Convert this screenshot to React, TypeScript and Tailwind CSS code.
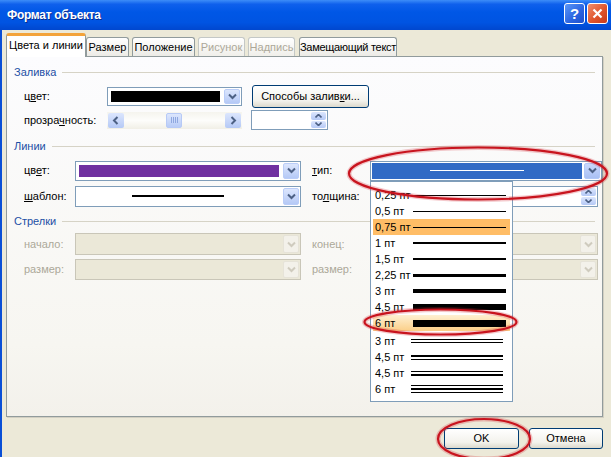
import React from "react";

function Chevron({ color = "#4D6185", dir = "down" }: { color?: string; dir?: "down" | "up" | "left" | "right" }) {
  const d =
    dir === "down"
      ? "M1 1.5 L4.5 5 L8 1.5"
      : dir === "up"
      ? "M1 5 L4.5 1.5 L8 5"
      : dir === "left"
      ? "M5.5 1 L2 4.5 L5.5 8"
      : "M2.5 1 L6 4.5 L2.5 8";
  const vert = dir === "down" || dir === "up";
  return (
    <svg width={vert ? 9 : 8} height={vert ? 7 : 9} viewBox={vert ? "0 0 9 7" : "0 0 8 9"}>
      <path d={d} stroke={color} strokeWidth="2" fill="none" />
    </svg>
  );
}

function Arrow({ disabled, blue }: { disabled?: boolean; blue?: boolean }) {
  return (
    <div
      className={`w-[16px] shrink-0 m-px rounded-[2px] flex items-center justify-center border ${
        disabled
          ? "bg-[#F3F1EA] border-[#E6E3D8]"
          : blue
          ? "bg-[linear-gradient(#C9D8FC,#A9C0F3)] border-[#B2C8F7]"
          : "bg-[linear-gradient(#DCE6FD,#B5C9F6)] border-[#BACDF8]"
      }`}
    >
      <Chevron color={disabled ? "#CFCBBE" : "#4D6185"} />
    </div>
  );
}

function Combo({ className, children, disabled }: { className: string; children?: React.ReactNode; disabled?: boolean }) {
  return (
    <div
      className={`flex shrink-0 border ${
        disabled ? "border-[#C9C6B8] bg-[#EBE8D8]" : "border-[#7F9DB9] bg-white"
      } ${className}`}
    >
      <div className="flex-1 flex items-center justify-center p-[3px]">{children}</div>
      <Arrow disabled={disabled} />
    </div>
  );
}

function Spin({ className }: { className: string }) {
  return (
    <div className={`flex shrink-0 border border-[#7F9DB9] bg-white ${className}`}>
      <div className="flex-1" />
      <div className="w-[15px] m-px flex flex-col gap-px">
        <div className="flex-1 rounded-[2px] bg-[linear-gradient(#DCE6FD,#B5C9F6)] flex items-center justify-center">
          <svg width="7" height="4" viewBox="0 0 7 4">
            <path d="M0.5 3.5 L3.5 0.5 L6.5 3.5" stroke="#4D6185" strokeWidth="1.6" fill="none" />
          </svg>
        </div>
        <div className="flex-1 rounded-[2px] bg-[linear-gradient(#DCE6FD,#B5C9F6)] flex items-center justify-center">
          <svg width="7" height="4" viewBox="0 0 7 4">
            <path d="M0.5 0.5 L3.5 3.5 L6.5 0.5" stroke="#4D6185" strokeWidth="1.6" fill="none" />
          </svg>
        </div>
      </div>
    </div>
  );
}

function Header({ title, className }: { title: string; className: string }) {
  return (
    <div className={`flex items-center pl-[7px] pr-[7px] ${className}`}>
      <span className="text-[#1D4FA5]">{title}</span>
      <div className="flex-1 h-px bg-[#D6D3C6] ml-[6px]" />
    </div>
  );
}

function XPButton({ className, children }: { className: string; children: React.ReactNode }) {
  return (
    <div
      className={`flex items-center justify-center border border-[#003C74] rounded-[3px] bg-[linear-gradient(#FFFFFF,#F3F2EC_70%,#DCD9CC)] ${className}`}
    >
      {children}
    </div>
  );
}

type Item = { label: string; kind: "single" | "compound"; lines: number[]; hl?: "sel" | "hover" };

const items: Item[] = [
  { label: "0,25 пт", kind: "single", lines: [1] },
  { label: "0,5 пт", kind: "single", lines: [1] },
  { label: "0,75 пт", kind: "single", lines: [1], hl: "sel" },
  { label: "1 пт", kind: "single", lines: [2] },
  { label: "1,5 пт", kind: "single", lines: [2] },
  { label: "2,25 пт", kind: "single", lines: [3] },
  { label: "3 пт", kind: "single", lines: [4] },
  { label: "4,5 пт", kind: "single", lines: [6] },
  { label: "6 пт", kind: "single", lines: [7], hl: "hover" },
];

const compound: Item[] = [
  { label: "3 пт", kind: "compound", lines: [1, 1] },
  { label: "4,5 пт", kind: "compound", lines: [2, 1] },
  { label: "4,5 пт", kind: "compound", lines: [1, 2] },
  { label: "6 пт", kind: "compound", lines: [1, 2, 1] },
];

function ListItem({ it }: { it: Item }) {
  const bg =
    it.hl === "sel"
      ? "bg-[#FFBD66]"
      : it.hl === "hover"
      ? "bg-[linear-gradient(#FEF0D2,#FBCF88)]"
      : "";
  return (
    <div className={`flex items-center h-[16px] pl-[2px] ${bg}`}>
      <span className="whitespace-nowrap">{it.label}</span>
      {it.kind === "single" ? (
        <div className="ml-auto mr-[4px] w-[93px] bg-black" style={{ height: it.lines[0] }} />
      ) : (
        <div className="ml-auto mr-[7px] w-[92px] flex flex-col gap-[2px]">
          {it.lines.map((h, i) => (
            <div key={i} className="w-full bg-black" style={{ height: h }} />
          ))}
        </div>
      )}
    </div>
  );
}

export default function App() {
  return (
    <div className="w-[611px] h-[457px] overflow-hidden relative bg-[#ECE9D8] flex flex-col font-['Liberation_Sans',Arial,sans-serif] text-[11px] text-black leading-none">
      {/* Title bar */}
      <div className="h-[30px] shrink-0 flex items-center pl-[7px] pr-[3px] bg-[linear-gradient(to_bottom,#3D8DF8_0%,#0F60EC_14%,#0057E6_40%,#0054E2_75%,#0047CF_100%)]">
        <span className="text-white font-bold text-[12px] tracking-[-0.3px] [text-shadow:1px_1px_0_#0B2C8C]">Формат объекта</span>
        <div className="ml-auto flex gap-[2px] self-start mt-[3px]">
          <div className="w-[21px] h-[21px] rounded-[3px] border border-white bg-[linear-gradient(135deg,#5A97F8,#2A63E0_60%,#1E4FCB)] flex items-center justify-center text-white font-bold text-[15px]">
            ?
          </div>
          <div className="w-[21px] h-[21px] rounded-[3px] border border-white bg-[linear-gradient(135deg,#EF8E6E,#E0552C_55%,#C6391A)] flex items-center justify-center">
            <svg width="11" height="11" viewBox="0 0 11 11">
              <path d="M1.5 1.5 L9.5 9.5 M9.5 1.5 L1.5 9.5" stroke="white" strokeWidth="2.2" />
            </svg>
          </div>
        </div>
      </div>

      <div className="flex-1 flex">
        <div className="w-[3px] bg-[#0A4FD6]" />
        <div className="flex-1 pl-[4px] pr-[8px] pt-[3px] flex flex-col">
          {/* Tabs */}
          <div className="flex items-end h-[24px] relative z-10 -mb-px whitespace-nowrap">
            <div className="w-[80px] h-[24px] bg-white border border-[#919B9C] border-b-0 border-t-[3px] border-t-[#F3A33A] rounded-t-[3px] flex items-center justify-center pb-[2px]">
              Цвета и линии
            </div>
            <div className="w-[43px] h-[19px] mb-px border border-[#919B9C] border-b-0 rounded-t-[3px] bg-[linear-gradient(#FFFFFF,#ECEBE6)] flex items-center justify-center">
              Размер
            </div>
            <div className="w-[63px] h-[19px] mb-px ml-[3px] border border-[#919B9C] border-b-0 rounded-t-[3px] bg-[linear-gradient(#FFFFFF,#ECEBE6)] flex items-center justify-center">
              Положение
            </div>
            <div className="w-[47px] h-[19px] mb-px ml-[3px] border border-[#C4C8C6] border-b-0 rounded-t-[3px] bg-[linear-gradient(#FFFFFF,#F0EFEA)] flex items-center justify-center text-[#ACA899]">
              Рисунок
            </div>
            <div className="w-[47px] h-[19px] mb-px ml-[3px] border border-[#C4C8C6] border-b-0 rounded-t-[3px] bg-[linear-gradient(#FFFFFF,#F0EFEA)] flex items-center justify-center text-[#ACA899]">
              Надпись
            </div>
            <div className="w-[98px] h-[19px] mb-px ml-[4px] border border-[#919B9C] border-b-0 rounded-t-[3px] bg-[linear-gradient(#FFFFFF,#ECEBE6)] flex items-center justify-center tracking-[-0.3px]">
              Замещающий текст
            </div>
          </div>

          {/* Panel */}
          <div className="h-[361px] border border-[#919B9C] bg-[linear-gradient(#FCFCFE,#F7F6F1_80%,#F3F1EB)] shadow-[1px_1px_0_#D2CFC2] pt-[3px] flex flex-col">
            <Header title="Заливка" className="h-[24px]" />
            <div className="h-[24px] flex items-center pl-[17px]">
              <span className="w-[83px]">
                ц<span className="underline">в</span>ет:
              </span>
              <Combo className="w-[135px] h-[19px]">
                <div className="w-full h-full bg-black" />
              </Combo>
              <XPButton className="ml-[10px] w-[117px] h-[23px]">
                <span>
                  Способы залив<span className="underline">к</span>и...
                </span>
              </XPButton>
            </div>
            <div className="h-[24px] flex items-center pl-[17px]">
              <span className="w-[83px]">
                прозра<span className="underline">ч</span>ность:
              </span>
              <div className="w-[135px] h-[17px] flex bg-[linear-gradient(#F5F4EE,#FDFDFB,#F1EFE6)]">
                <div className="w-[16px] m-px rounded-[2px] bg-[linear-gradient(#DCE6FD,#B5C9F6)] flex items-center justify-center">
                  <Chevron dir="left" />
                </div>
                <div className="flex-1 flex">
                  <div className="ml-[41px] w-[16px] my-px rounded-[2px] bg-[linear-gradient(#DCE6FD,#B9CCF7)] border border-[#B7CAF6] flex items-center justify-center gap-px">
                    <div className="w-px h-[6px] bg-[#8FA8E0]" />
                    <div className="w-px h-[6px] bg-[#8FA8E0]" />
                    <div className="w-px h-[6px] bg-[#8FA8E0]" />
                    <div className="w-px h-[6px] bg-[#8FA8E0]" />
                  </div>
                </div>
                <div className="w-[16px] m-px rounded-[2px] bg-[linear-gradient(#DCE6FD,#B5C9F6)] flex items-center justify-center">
                  <Chevron dir="right" />
                </div>
              </div>
              <Spin className="ml-[9px] w-[77px] h-[20px]" />
            </div>

            <Header title="Линии" className="h-[28px]" />
            <div className="h-[21px] flex items-center pl-[17px]">
              <span className="w-[51px]">
                цв<span className="underline">е</span>т:
              </span>
              <Combo className="w-[226px] h-[20px]">
                <div className="w-full h-full bg-[#7030A0]" />
              </Combo>
              <span className="ml-[11px] w-[58px]">
                <span className="underline">т</span>ип:
              </span>
              <div className="w-[232px] h-[20px] flex border border-[#7F9DB9] bg-white">
                <div className="flex-1 m-px bg-[#316AC5] flex items-center justify-center">
                  <div className="w-[94px] h-px bg-white" />
                </div>
                <Arrow blue />
              </div>
            </div>
            <div className="h-[30px] flex items-center pl-[17px]">
              <span className="w-[51px]">
                <span className="underline">ш</span>аблон:
              </span>
              <Combo className="w-[226px] h-[21px]">
                <div className="w-[92px] h-[2px] bg-black -ml-[2px]" />
              </Combo>
              <span className="ml-[11px] w-[58px]">
                то<span className="underline">л</span>щина:
              </span>
              <Spin className="w-[228px] h-[21px]" />
            </div>

            <Header title="Стрелки" className="h-[20px]" />
            <div className="h-[26px] flex items-center pl-[17px] text-[#ACA899]">
              <span className="w-[51px]">начало:</span>
              <Combo disabled className="w-[226px] h-[22px]" />
              <span className="ml-[11px] w-[58px]">конец:</span>
              <Combo disabled className="w-[228px] h-[22px]" />
            </div>
            <div className="h-[24px] flex items-center pl-[17px] text-[#ACA899]">
              <span className="w-[51px]">размер:</span>
              <Combo disabled className="w-[226px] h-[21px]" />
              <span className="ml-[11px] w-[58px]">размер:</span>
              <Combo disabled className="w-[228px] h-[21px]" />
            </div>
          </div>

          {/* Buttons */}
          <div className="mt-[11px] flex justify-end gap-[10px]">
            <XPButton className="w-[75px] h-[21px]">OK</XPButton>
            <XPButton className="w-[74px] h-[21px]">Отмена</XPButton>
          </div>
        </div>
      </div>

      {/* Dropdown list */}
      <div className="absolute left-[370px] top-[181px] w-[143px] h-[221px] bg-white border border-[#7F9DB9] px-[2px] pt-[5px] flex flex-col z-20">
        {items.map((it, i) => (
          <ListItem key={i} it={it} />
        ))}
        <div className="h-[2px]" />
        {compound.map((it, i) => (
          <ListItem key={"c" + i} it={it} />
        ))}
      </div>

      {/* Red ellipses */}
      <svg className="absolute inset-0 pointer-events-none z-30" width="611" height="457" viewBox="0 0 611 457">
        <g fill="none">
          <ellipse cx="478" cy="173.5" rx="129" ry="26" stroke="rgba(210,40,50,0.25)" strokeWidth="5" />
          <ellipse cx="478" cy="173.5" rx="129" ry="26" stroke="#C8141E" strokeWidth="2.2" />
          <ellipse cx="440.5" cy="322" rx="76" ry="12.5" stroke="rgba(210,40,50,0.25)" strokeWidth="5" />
          <ellipse cx="440.5" cy="322" rx="76" ry="12.5" stroke="#C8141E" strokeWidth="2.2" />
          <ellipse cx="484" cy="439" rx="46" ry="20" stroke="rgba(210,40,50,0.25)" strokeWidth="5" />
          <ellipse cx="484" cy="439" rx="46" ry="20" stroke="#C8141E" strokeWidth="2.2" />
        </g>
      </svg>
    </div>
  );
}
